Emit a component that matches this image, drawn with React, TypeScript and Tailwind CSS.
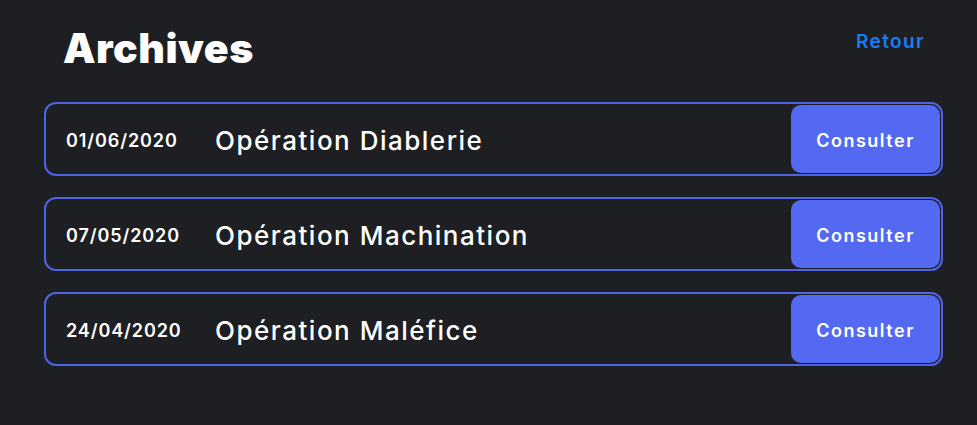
import React from "react";

const operations = [
  { date: "01/06/2020", name: "Opération Diablerie" },
  { date: "07/05/2020", name: "Opération Machination" },
  { date: "24/04/2020", name: "Opération Maléfice" },
];

export default function App() {
  return (
    <div
      className="w-[977px] h-[425px] bg-[#1e1f23] text-white"
      style={{ fontFamily: "Inter, 'DejaVu Sans', sans-serif" }}
    >
      <div className="pl-[44px] pr-[34px] pt-[24px]">
        <div className="flex items-start justify-between">
          <h1 className="pl-[19px] text-[41px] leading-[48px] font-black tracking-[0.5px]">Archives</h1>
          <a href="#" className="mr-[18px] mt-[4px] text-[19px] font-semibold tracking-[1.4px] text-[#1a7cf5]">
            Retour
          </a>
        </div>
        <div className="mt-[30px] flex w-[899px] flex-col gap-[21px]">
          {operations.map((op) => (
            <div
              key={op.date}
              className="flex h-[74px] items-center rounded-[12px] border-2 border-[#4f63e6] p-[1px]"
            >
              <span className="w-[168px] pl-[19px] pt-[2px] text-[18px] font-semibold tracking-[0.9px]">
                {op.date}
              </span>
              <span className="flex-1 pt-[3px] text-[26px] font-medium tracking-[1.5px]">{op.name}</span>
              <button className="h-full w-[149px] rounded-[10px] bg-[#5469f1] pt-[2px] text-[18px] font-semibold tracking-[1.5px] text-white">
                Consulter
              </button>
            </div>
          ))}
        </div>
      </div>
    </div>
  );
}
